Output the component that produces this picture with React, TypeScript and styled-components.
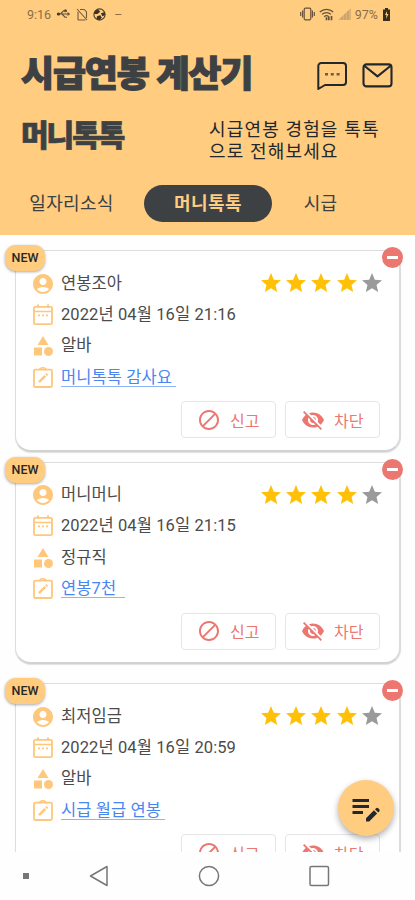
import React from "react";
import styled, { createGlobalStyle } from "styled-components";
import {
  MdAccountCircle,
  MdBlock,
  MdCategory,
  MdEditNote,
  MdStar,
  MdVisibilityOff,
} from "react-icons/md";

const colors = {
  amber: "#ffcc80",
  icon: "#ffc77c",
  dark: "#3d4144",
  ink: "#22272c",
  text: "#4b4b4b",
  link: "#4a86f2",
  red: "#ec7770",
  star: "#ffc107",
  muted: "#9a9a9a",
};

const GlobalStyle = createGlobalStyle`
  * { box-sizing: border-box; }
  body { margin: 0; background: #fefefe; }
  h1, h2, p { margin: 0; }
  button { font: inherit; padding: 0; }
  svg { display: block; flex: none; }
`;

const Screen = styled.div`
  position: relative;
  display: flex;
  flex-direction: column;
  width: 415px;
  height: 900px;
  overflow: hidden;
  background: #fefefe;
  font-family: Roboto, "Noto Sans CJK KR", sans-serif;
  color: ${colors.text};
`;

const Header = styled.header`
  flex: none;
  height: 235px;
  background: ${colors.amber};
`;

const StatusBar = styled.div`
  display: flex;
  align-items: center;
  justify-content: space-between;
  height: 28px;
  padding: 0 24px 0 27px;
  font-size: 12.5px;
  color: #8a6f49;
`;

const StatusGroup = styled.div<{ $gap: number }>`
  display: flex;
  align-items: center;
  gap: ${(p) => p.$gap}px;
`;

const TitleRow = styled.div`
  display: flex;
  align-items: center;
  justify-content: space-between;
  height: 74px;
  padding: 20px 22px 0 21px;
`;

const Title = styled.h1`
  font-size: 36px;
  line-height: 40px;
  font-weight: 900;
  letter-spacing: -1.2px;
  white-space: nowrap;
  color: ${colors.dark};
  -webkit-text-stroke: 1.2px ${colors.dark};
`;

const HeaderActions = styled.div`
  display: flex;
  gap: 13px;
  padding-top: 2px;
`;

const IntroRow = styled.div`
  display: flex;
  justify-content: space-between;
  height: 83px;
  padding: 17px 29px 0 21px;
`;

const Subtitle = styled.h2`
  font-size: 30px;
  line-height: 34px;
  font-weight: 900;
  letter-spacing: -2px;
  color: ${colors.dark};
  -webkit-text-stroke: 0.7px ${colors.dark};
`;

const Intro = styled.p`
  width: 177px;
  font-size: 18px;
  line-height: 22px;
  letter-spacing: 1.15px;
  white-space: nowrap;
  color: ${colors.ink};
`;

const Tabs = styled.nav`
  display: flex;
  height: 37px;
`;

const Tab = styled.button<{ $width: number; $active?: boolean }>`
  width: ${(p) => p.$width}px;
  height: 37px;
  border: 0;
  border-radius: 19px;
  background: ${(p) => (p.$active ? colors.dark : "transparent")};
  color: ${(p) => (p.$active ? colors.amber : colors.dark)};
  font-size: 18px;
  letter-spacing: ${(p) => (p.$active ? 0.4 : 0.3)}px;
  font-weight: ${(p) => (p.$active ? 700 : 400)};
  line-height: 35px;
  white-space: nowrap;
`;

const TabSlot = styled.div`
  width: 144px;
`;

const List = styled.main`
  flex: 1;
  min-height: 0;
  overflow: hidden;
  padding: 15px 14px 0 15px;
`;

const Card = styled.article<{ $gap: number }>`
  position: relative;
  height: 202px;
  margin-bottom: ${(p) => p.$gap}px;
  padding: 17px 18px 0 17px;
  border: 1px solid #dedede;
  border-right: 2px solid #dcdcdc;
  border-bottom: 2px solid #d2d2d2;
  border-radius: 16px;
  background: #fff;
  box-shadow: 0 1px 1px rgba(0, 0, 0, 0.12);
`;

const NewBadge = styled.span`
  position: absolute;
  top: -6px;
  left: -11px;
  width: 40px;
  height: 26px;
  border-radius: 11px;
  background: ${colors.amber};
  box-shadow: 0 1px 3px rgba(0, 0, 0, 0.35);
  color: #272727;
  font-size: 12.5px;
  font-weight: 500;
  line-height: 26px;
  text-align: center;
`;

const RemoveBadge = styled.button`
  position: absolute;
  top: -4px;
  right: -4px;
  display: grid;
  place-items: center;
  width: 21px;
  height: 21px;
  border: 0;
  border-radius: 50%;
  background: ${colors.red};
`;

const MinusBar = styled.span`
  width: 11px;
  height: 3px;
  background: #fff;
`;

const Row = styled.div`
  display: flex;
  align-items: center;
  height: 31.3px;
`;

const RowIcon = styled.span`
  display: flex;
  flex: none;
  width: 24px;
  margin: 0 6px 0 -2px;
  color: ${colors.icon};
`;

const RowText = styled.span`
  font-size: 16.5px;
  line-height: 20px;
  letter-spacing: 0.1px;
  font-weight: 400;
  white-space: pre;
`;

const RowLink = styled(RowText)`
  border-bottom: 1px solid #8fb3f7;
  color: ${colors.link};
  line-height: 17px;
`;

const Stars = styled.div`
  display: flex;
  gap: 1.3px;
  margin: -1px -3px 0 auto;
`;

const Actions = styled.div`
  display: flex;
  justify-content: flex-end;
  gap: 9px;
  margin: 8px 1px 0 0;
`;

const ActionButton = styled.button`
  display: flex;
  align-items: center;
  gap: 9px;
  width: 95px;
  height: 37px;
  padding-left: 15px;
  border: 1px solid #e6e6e6;
  border-radius: 4px;
  background: #fff;
  color: ${colors.red};
  font-size: 16px;
  white-space: nowrap;
`;

const Fab = styled.button`
  position: absolute;
  right: 21px;
  bottom: 64px;
  display: grid;
  place-items: center;
  width: 56px;
  height: 56px;
  border: 0;
  border-radius: 50%;
  background: ${colors.amber};
  box-shadow: 0 3px 6px rgba(0, 0, 0, 0.32);
  color: #222830;
`;

const SystemNav = styled.footer`
  display: flex;
  flex: none;
  align-items: center;
  height: 48px;
  padding-left: 23px;
  background: #fefefe;
`;

const NavDot = styled.span`
  width: 6px;
  height: 6px;
  margin-right: 60px;
  background: #777;
`;

const NavShapes = styled.div`
  display: flex;
  align-items: center;
  gap: 88px;
`;

const CalendarIcon = () => (
  <svg width="24" height="24" viewBox="0 0 24 24" fill="none" stroke="currentColor">
    <rect x="3" y="3.9" width="18" height="17.2" rx="1.2" strokeWidth="1.8" />
    <path d="M3 8.5h18" strokeWidth="1.5" />
    <path d="M7 1.5v3M17 1.5v3" strokeWidth="2" />
    <path d="M7 12.3h2M11 12.3h2M15 12.3h2" strokeWidth="1.8" />
  </svg>
);

const ClipboardIcon = () => (
  <svg width="24" height="24" viewBox="0 0 24 24" fill="none" stroke="currentColor">
    <rect x="3" y="3.6" width="18" height="17.4" rx="1.4" strokeWidth="1.8" />
    <path d="M8.4 4.2a3.6 3.2 0 0 1 7 0" strokeWidth="1.6" />
    <path d="M8 16.2l6.3-6.3" strokeWidth="2.5" />
    <path d="M15.1 9.1l1.3-1.3" strokeWidth="2.5" />
  </svg>
);

const MessageIcon = () => (
  <svg width="32" height="32" viewBox="0 0 32 32" fill="none" stroke={colors.ink} strokeWidth="2" strokeLinejoin="round">
    <path d="M2.3 29V6a3 3 0 0 1 3-3H27a3 3 0 0 1 3 3v16a3 3 0 0 1-3 3H9z" />
    <path d="M9 14.2h3M14.8 14.2h3M20.6 14.2h3" stroke="#6e5d43" strokeWidth="2.6" />
  </svg>
);

const MailIcon = () => (
  <svg width="32" height="32" viewBox="0 0 32 32" fill="none" stroke={colors.ink} strokeWidth="2.1" strokeLinejoin="round">
    <rect x="2.5" y="4.4" width="28" height="22" rx="3" />
    <path d="M3.3 5.8l13.2 10.6L29.7 5.8" />
  </svg>
);

const UsbIcon = () => (
  <svg width="15" height="12" viewBox="0 0 15 12" fill="none" stroke="#65523a" strokeWidth="1.1">
    <circle cx="2.5" cy="6" r="1.6" fill="#33291c" stroke="none" />
    <path d="M2 6h11M4.5 6l3-3.2h2M6 6l3 3.2h2" />
    <path d="M11.5 4l2.7 2-2.7 2z" fill="#65523a" stroke="none" />
    <circle cx="9.5" cy="2.8" r="1" fill="#65523a" />
  </svg>
);

const NoSimIcon = () => (
  <svg width="12" height="13" viewBox="0 0 12 13" fill="none" stroke="#6f5b40" strokeWidth="1.1">
    <path d="M2 12V3.7M4 1.5h4.2L10.5 4v6M2 12h7.5M1 1l10 11" />
  </svg>
);

const BallIcon = () => (
  <svg width="13" height="13" viewBox="0 0 13 13">
    <circle cx="6.5" cy="6.5" r="5.6" fill="none" stroke="#4b3d2a" strokeWidth="1.1" />
    <path d="M2 3l3-1.8 2.2 2.5-2.8 2.2L1 6zM8 5.2L11.8 4l.2 3.3-2.7 1zM4 8.2l3.4-1 1.4 2.5-2.3 2.2L3.5 11z" fill="#3e3323" />
  </svg>
);

const VibrateIcon = () => (
  <svg width="15" height="14" viewBox="0 0 15 14" fill="none" stroke="#65523a" strokeWidth="1.2">
    <rect x="4.2" y="1.2" width="6.6" height="11.6" rx="1.2" />
    <path d="M2.6 3.5v7M12.4 3.5v7M.7 5v4M14.3 5v4" />
  </svg>
);

const WifiIcon = () => (
  <svg width="15" height="13" viewBox="0 0 15 13" fill="none" stroke="#65523a" strokeWidth="1.2">
    <path d="M.8 4C4.5.4 10.5.4 14.2 4M3 6.4c2.5-2.3 6.5-2.3 9 0M5.2 8.8c1.3-1.2 3.3-1.2 4.6 0" />
    <path d="M7.5 9.2v3M9.8 12.2V8.5M12.5 8v4.2" strokeWidth="1.7" />
  </svg>
);

const SignalIcon = () => (
  <svg width="13" height="12" viewBox="0 0 13 12">
    <path d="M0 12L13 0v12z" fill="#dcb274" />
    <path d="M4 9v3M7 6v6M10 3v9" stroke="#bd965f" />
  </svg>
);

const BatteryIcon = () => (
  <svg width="9" height="13" viewBox="0 0 9 13">
    <path d="M1 1.5h2V0h3v1.5h2V13H1z" fill="#37301f" />
    <path d="M5 3L3 7h1.5L4 11l2.5-5H5z" fill="#ffcc80" />
  </svg>
);

interface Review {
  author: string;
  date: string;
  job: string;
  message: string;
  gap: number;
}

const reviews: Review[] = [
  { author: "연봉조아", date: "2022년 04월 16일 21:16", job: "알바", message: "머니톡톡 감사요 ", gap: 9.5 },
  { author: "머니머니", date: "2022년 04월 16일 21:15", job: "정규직", message: "연봉7천  ", gap: 19.5 },
  { author: "최저임금", date: "2022년 04월 16일 20:59", job: "알바", message: "시급 월급 연봉 ", gap: 0 },
];

const ReviewCard = ({ review }: { review: Review }) => (
  <Card $gap={review.gap}>
    <NewBadge>NEW</NewBadge>
    <RemoveBadge aria-label="삭제"><MinusBar /></RemoveBadge>
    <Row>
      <RowIcon><MdAccountCircle size={24} /></RowIcon>
      <RowText>{review.author}</RowText>
      <Stars>
        {[0, 1, 2, 3, 4].map((i) => (
          <MdStar key={i} size={24} color={i < 4 ? colors.star : colors.muted} />
        ))}
      </Stars>
    </Row>
    <Row>
      <RowIcon><CalendarIcon /></RowIcon>
      <RowText>{review.date}</RowText>
    </Row>
    <Row>
      <RowIcon><MdCategory size={24} /></RowIcon>
      <RowText>{review.job}</RowText>
    </Row>
    <Row>
      <RowIcon><ClipboardIcon /></RowIcon>
      <RowLink>{review.message}</RowLink>
    </Row>
    <Actions>
      <ActionButton><MdBlock size={24} />신고</ActionButton>
      <ActionButton><MdVisibilityOff size={24} />차단</ActionButton>
    </Actions>
  </Card>
);

export default function App() {
  return (
    <Screen>
      <GlobalStyle />
      <Header>
        <StatusBar>
          <StatusGroup $gap={5}>
            <span>9:16</span>
            <UsbIcon />
            <NoSimIcon />
            <BallIcon />
            <span>&nbsp;–</span>
          </StatusGroup>
          <StatusGroup $gap={4}>
            <VibrateIcon />
            <WifiIcon />
            <SignalIcon />
            <span>97%</span>
            <BatteryIcon />
          </StatusGroup>
        </StatusBar>
        <TitleRow>
          <Title>시급연봉 계산기</Title>
          <HeaderActions>
            <MessageIcon />
            <MailIcon />
          </HeaderActions>
        </TitleRow>
        <IntroRow>
          <Subtitle>머니톡톡</Subtitle>
          <Intro>시급연봉 경험을 톡톡<br />으로 전해보세요</Intro>
        </IntroRow>
        <Tabs>
          <TabSlot><Tab $width={143}>일자리소식</Tab></TabSlot>
          <Tab $width={128} $active>머니톡톡</Tab>
          <Tab $width={97}>시급</Tab>
        </Tabs>
      </Header>
      <List>
        {reviews.map((review) => (
          <ReviewCard key={review.author} review={review} />
        ))}
      </List>
      <SystemNav>
        <NavDot />
        <NavShapes>
          <svg width="21" height="22" viewBox="0 0 21 22" fill="none" stroke="#777" strokeWidth="1.5" strokeLinejoin="round">
            <path d="M18 1.5v19L1.5 11z" />
          </svg>
          <svg width="22" height="22" viewBox="0 0 22 22" fill="none" stroke="#777" strokeWidth="1.5">
            <circle cx="11" cy="11" r="9.6" />
          </svg>
          <svg width="22" height="22" viewBox="0 0 22 22" fill="none" stroke="#777" strokeWidth="1.5">
            <rect x="2" y="1.5" width="18.5" height="19" rx="1.5" />
          </svg>
        </NavShapes>
      </SystemNav>
      <Fab aria-label="글쓰기"><MdEditNote size={36} /></Fab>
    </Screen>
  );
}
